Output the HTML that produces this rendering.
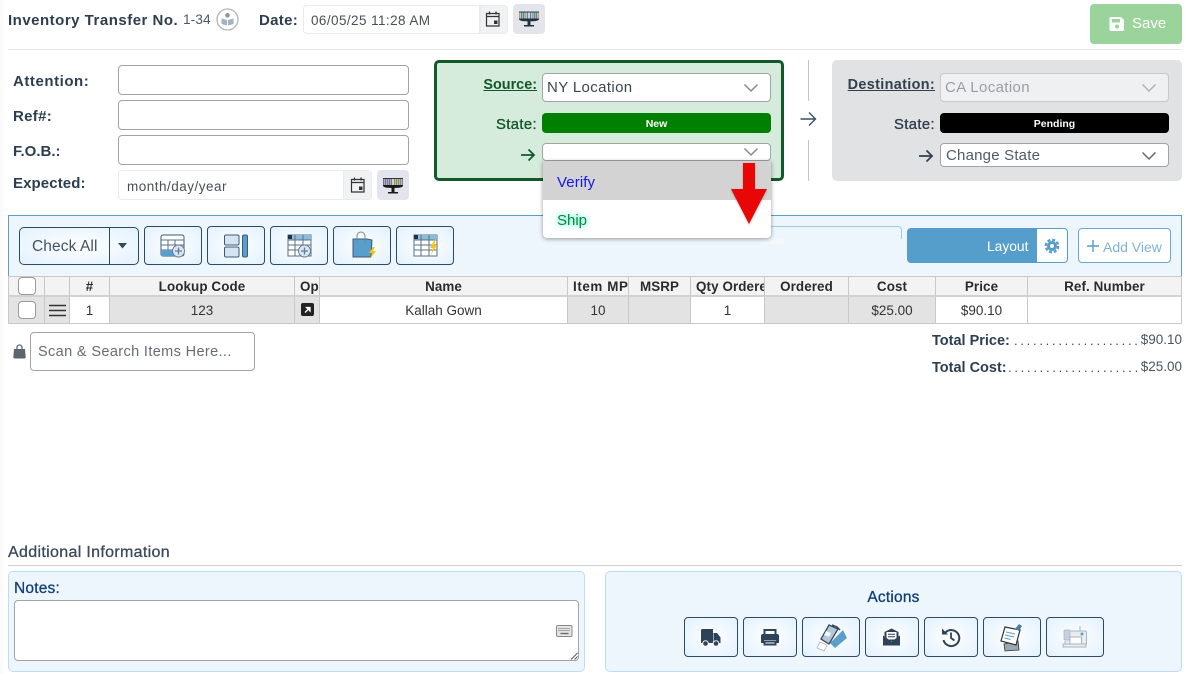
<!DOCTYPE html>
<html lang="en"><head><meta charset="utf-8"><title>Inventory Transfer</title>
<style>
html,body{margin:0;padding:0;background:#fff;width:1187px;height:674px;overflow:hidden}
body{position:relative;font-family:"Liberation Sans",Arial,sans-serif;color:#2c3e50;font-size:14px}
.a{position:absolute;box-sizing:border-box}
.t{position:absolute;white-space:nowrap;line-height:20px;height:20px}
.b{font-weight:700}
.inp{position:absolute;box-sizing:border-box;background:#fff;border:1px solid #a3a3a3;border-radius:4px}
.ibtn{position:absolute;box-sizing:border-box;border:1px solid #2c4a63;border-radius:4px;background:radial-gradient(ellipse at center,#fff 0%,#e2f1fe 100%)}
.ibtn svg{position:absolute;left:0;top:0}
.cell{position:absolute;box-sizing:border-box;border-right:1px solid #c8c8c8;text-align:center;color:#333;white-space:nowrap;overflow:hidden}
.h{top:276px;height:21px;background:#f3f3f3;font-weight:700;line-height:20px;font-size:13.4px;letter-spacing:.1px;color:#2b2b2b;border-top:1px solid #c8c8c8;border-bottom:2px solid #d2d2d2}
.r{top:297px;height:27px;line-height:27px;font-size:13.5px;background:#fff;border-bottom:1px solid #c8c8c8}
.g{background:#e3e3e3}
.chk{position:absolute;box-sizing:border-box;width:18px;height:18px;background:#fff;border:1px solid #9a9a9a;border-radius:4px}
</style></head><body>
<div class="a" style="left:0;top:0;width:3px;height:674px;background:#fbfbfb"></div>

<!-- header -->
<div class="t b" style="left:8px;top:11px;font-size:15px;letter-spacing:.5px">Inventory Transfer No.</div>
<div class="t" style="left:183px;top:10px;font-size:13.8px;color:#4d5b69">1-34</div>
<svg class="a" style="left:216px;top:8px" width="23" height="23" viewBox="0 0 23 23"><circle cx="11.5" cy="11.5" r="10.5" fill="#fff" stroke="#b4b4b4" stroke-width="1.3"/><circle cx="11.5" cy="7.3" r="2.3" fill="#8a96a3"/><path d="M5.500 10.500l5.500 1.500v5.500l-5.500-1.500zM17.500 10.500L12 12v5.500l5.500-1.500z" fill="#9fb3c4"/></svg>
<div class="t b" style="left:259px;top:11px;font-size:15px;letter-spacing:.3px">Date:</div>
<div class="a" style="left:303px;top:5px;width:177px;height:29px;border:1px solid #e9ecef;border-radius:4px 0 0 4px;background:#fff"></div>
<div class="t" style="left:311px;top:11px;font-size:13.5px;letter-spacing:.42px;color:#4a4f55">06/05/25 11:28 AM</div>
<div class="a" style="left:480px;top:5px;width:28px;height:29px;background:#f1f2f3;border:1px solid #e9ecef;border-radius:0 4px 4px 0"></div>
<svg class="a" style="left:485px;top:10px" width="16" height="18" viewBox="0 0 16 18"><path d="M1.500 3.500h12.500v12.500H1.500zM1.500 6.500h12.500" fill="none" stroke="#333" stroke-width="1.200"/><path d="M4.500 1.500v3M11 1.500v3" stroke="#333" stroke-width="1.300"/><rect x="9" y="10.500" width="3.500" height="3.500" fill="#333"/></svg>
<div class="a" style="left:513px;top:4px;width:32px;height:30px;background:#e2e6ec;border-radius:4px"></div>
<svg class="a" style="left:518px;top:9px" width="22" height="20" viewBox="0 0 22 20"><path d="M1 3.500h1.500v6H1zM7 3.500h1.500v6H7zM13.500 3.500H15v6h-1.500zM19.500 3.500H21v6h-1.500z" fill="#e39a2d"/><path d="M3 3.500h1.500v6H3zM5 3.500h1.500v6H5zM9 3.500h1.200v6H9zM11.800 3.500H13v6h-1.200zM15.500 3.500H17v6h-1.500zM17.500 3.500H19v6h-1.500z" fill="#3a8fd0"/><path d="M1 3h20" stroke="#2c3e50"/><path d="M1 9.500h20v.7c-1 1.800-4 2-8.500 2.100V16H16v1.500H6V16h3.500v-3.700C5 12.200 2 12 1 10.200z" fill="#22303f"/></svg>
<div class="a" style="left:1090px;top:4px;width:92px;height:40px;background:#9bd49b;border-radius:4px"></div>
<svg class="a" style="left:1109px;top:16px" width="16" height="16" viewBox="0 0 16 16"><path d="M2 1h10l3 3v9.500a1.500 1.500 0 0 1-1.500 1.500h-11.500a1.500 1.500 0 0 1-1.500-1.500V2.500A1.500 1.500 0 0 1 2 1z" fill="#fff"/><rect x="3" y="3" width="8" height="3.500" fill="#9bd49b"/><circle cx="8" cy="10.500" r="2" fill="#9bd49b"/></svg>
<div class="t" style="left:1132px;top:14px;font-size:15px;color:#fff">Save</div>
<div class="a" style="left:8px;top:49px;width:1174px;height:1px;background:#e8e8e8"></div>

<!-- left form -->
<div class="t b" style="left:13px;top:72px;font-size:15px;letter-spacing:.55px">Attention:</div>
<div class="t b" style="left:13px;top:107px;font-size:15px;letter-spacing:.3px">Ref#:</div>
<div class="t b" style="left:13px;top:142px;font-size:15px">F.O.B.:</div>
<div class="t b" style="left:13px;top:174px;font-size:15px;letter-spacing:.1px">Expected:</div>
<div class="inp" style="left:118px;top:65px;width:291px;height:30px"></div>
<div class="inp" style="left:118px;top:100px;width:291px;height:30px"></div>
<div class="inp" style="left:118px;top:135px;width:291px;height:30px"></div>
<div class="a" style="left:118px;top:170px;width:226px;height:30px;border:1px solid #e9ecef;border-radius:4px 0 0 4px;background:#fff"></div>
<div class="t" style="left:127px;top:177px;font-size:13.5px;letter-spacing:.5px;color:#4a4f55">month/day/year</div>
<div class="a" style="left:343px;top:170px;width:29px;height:30px;background:#f1f2f3;border:1px solid #e9ecef;border-radius:0 4px 4px 0"></div>
<svg class="a" style="left:350px;top:176px" width="16" height="18" viewBox="0 0 16 18"><path d="M1.500 3.500h12.500v12.500H1.500zM1.500 6.500h12.500" fill="none" stroke="#333" stroke-width="1.200"/><path d="M4.500 1.500v3M11 1.500v3" stroke="#333" stroke-width="1.300"/><rect x="9" y="10.500" width="3.500" height="3.500" fill="#333"/></svg>
<div class="a" style="left:377px;top:170px;width:32px;height:30px;background:#e2e6ec;border-radius:4px"></div>
<svg class="a" style="left:382px;top:176px" width="22" height="20" viewBox="0 0 22 20"><path d="M1 3h1.500v6H1zM7 3h1.500v6H7z" fill="#8b5fa8"/><path d="M3 3h1.500v6H3zM5 3h1.500v6H5zM9 3h1.200v6H9z" fill="#6f7f8f"/><path d="M11.800 3H13v6h-1.200zM13.500 3H15v6h-1.500z" fill="#8b9a3a"/><path d="M15.500 3H17v6h-1.500zM17.500 3H19v6h-1.500zM19.500 3H21v6h-1.500z" fill="#888"/><path d="M1 2.500h20" stroke="#333"/><path d="M1 9h20v.9c-1 1.800-4 2-8.500 2.100V16H16v1.500H6V16h3.500v-4C5 11.900 2 11.700 1 9.900z" fill="#1a1a1a"/></svg>

<!-- source -->
<div class="a" style="left:434px;top:60px;width:350px;height:121px;background:#d5ebdb;border:3px solid #14582a;border-radius:5px"></div>
<div class="t" style="right:650px;top:75px;font-size:14.4px;color:#14582a;text-decoration:underline;font-weight:700">Source:</div>
<div class="inp" style="left:542px;top:73px;width:229px;height:29px"></div>
<div class="t" style="left:547px;top:78px;font-size:15px;letter-spacing:.37px;color:#3a4652">NY Location</div>
<svg class="a" style="left:743px;top:83px" width="16" height="10" viewBox="0 0 16 10"><path d="M1.500 1.500L8 8l6.500-6.500" fill="none" stroke="#888" stroke-width="1.500"/></svg>
<div class="t" style="right:650px;top:115px;font-size:14.8px;letter-spacing:.4px;color:#14582a;-webkit-text-stroke:.35px #14582a">State:</div>
<div class="a" style="left:542px;top:113px;width:229px;height:20px;background:#008000;border-radius:4px"></div>
<div class="t b" style="left:542px;width:229px;top:114px;text-align:center;font-size:10.5px;color:#fff">New</div>
<svg class="a" style="left:520px;top:147px" width="16" height="16" viewBox="0 0 16 16"><path d="M1 8h13M8.500 2.500L14 8l-5.500 5.500" fill="none" stroke="#14582a" stroke-width="1.800"/></svg>
<div class="inp" style="left:542px;top:143px;width:229px;height:18px"></div>
<svg class="a" style="left:743px;top:147px" width="16" height="10" viewBox="0 0 16 10"><path d="M1.500 1.500L8 8l6.500-6.500" fill="none" stroke="#888" stroke-width="1.500"/></svg>

<!-- separators -->
<div class="a" style="left:808px;top:60px;width:1px;height:41px;background:#c4c4c4"></div>
<div class="a" style="left:808px;top:140px;width:1px;height:41px;background:#c4c4c4"></div>
<svg class="a" style="left:799px;top:110px" width="19" height="18" viewBox="0 0 19 18"><path d="M1.500 9h15M10 2.500L16.500 9 10 15.500" fill="none" stroke="#3d4f63" stroke-width="1.400"/></svg>

<!-- destination -->
<div class="a" style="left:832px;top:60px;width:350px;height:121px;background:#e1e2e4;border-radius:5px"></div>
<div class="t" style="right:252px;top:75px;font-size:14.4px;letter-spacing:.35px;font-weight:700;color:#333f4d;text-decoration:underline">Destination:</div>
<div class="a" style="left:940px;top:73px;width:229px;height:29px;background:#eff0f2;border:1px solid #c8c9cb;border-radius:4px"></div>
<div class="t" style="left:945px;top:78px;font-size:15px;letter-spacing:.37px;color:#9a9da1">CA Location</div>
<svg class="a" style="left:1141px;top:83px" width="16" height="10" viewBox="0 0 16 10"><path d="M1.500 1.500L8 8l6.500-6.500" fill="none" stroke="#b0b2b5" stroke-width="1.500"/></svg>
<div class="t" style="right:252px;top:115px;font-size:14.8px;letter-spacing:.4px;color:#333f4d;-webkit-text-stroke:.35px #333f4d">State:</div>
<div class="a" style="left:940px;top:113px;width:229px;height:20px;background:#000;border-radius:4px"></div>
<div class="t b" style="left:940px;width:229px;top:114px;text-align:center;font-size:10.5px;color:#fff">Pending</div>
<svg class="a" style="left:918px;top:148px" width="16" height="16" viewBox="0 0 16 16"><path d="M1 8h13M8.500 2.500L14 8l-5.500 5.500" fill="none" stroke="#333f4d" stroke-width="1.800"/></svg>
<div class="inp" style="left:940px;top:143px;width:229px;height:24px"></div>
<div class="t" style="left:946px;top:146px;font-size:15px;letter-spacing:.2px;color:#4e5c6a">Change State</div>
<svg class="a" style="left:1141px;top:151px" width="16" height="10" viewBox="0 0 16 10"><path d="M1.500 1.500L8 8l6.500-6.500" fill="none" stroke="#666" stroke-width="1.500"/></svg>

<!-- toolbar panel -->
<div class="a" style="left:8px;top:215px;width:1174px;height:61px;background:#eef6fd;border:1px solid #5a9fca;border-bottom:0"></div>
<div class="a" style="left:600px;top:226px;width:302px;height:13px;border-top:1px solid #9ccbe8;border-right:1px solid #9ccbe8;border-radius:0 4px 0 0"></div>
<div class="a" style="left:19px;top:227px;width:120px;height:38px;border:1px solid #2c4a63;border-radius:5px;background:radial-gradient(ellipse at center,#fff 0%,#e2f1fe 100%)"></div>
<div class="a" style="left:109px;top:227px;width:1px;height:38px;background:#2c4a63"></div>
<div class="t" style="left:32px;top:237px;font-size:15.5px;letter-spacing:.1px;color:#3f5266">Check All</div>
<svg class="a" style="left:118px;top:243px" width="10" height="6" viewBox="0 0 10 6"><path d="M0 0h9L4.500 5.500z" fill="#2c4a63"/></svg>

<div class="ibtn" style="left:144px;top:226px;width:58px;height:39px"><svg width="56" height="37" viewBox="0 0 56 37"><rect x="16" y="8" width="23" height="21" rx="2" fill="#fff" stroke="#3f5a73" stroke-width="1"/><path d="M16 13h23M16 18h23M16 23h23M23 13v16M30 13v16" stroke="#5a7186" stroke-width="1"/><rect x="16" y="23" width="14" height="6" fill="#5a9ecb"/><circle cx="33.500" cy="24" r="6" fill="#dbe6ef" stroke="#5d7d99" stroke-width="1"/><path d="M33.500 20.500v7M30 24h7" stroke="#5d7d99" stroke-width="1.300"/></svg></div>
<div class="ibtn" style="left:207px;top:226px;width:58px;height:39px"><svg width="56" height="37" viewBox="0 0 56 37"><rect x="16.500" y="8" width="14.500" height="10" rx="1.500" fill="#d5e4f1" stroke="#3f5a73"/><rect x="16.500" y="20" width="14.500" height="10" rx="1.500" fill="#d5e4f1" stroke="#3f5a73"/><rect x="34.500" y="8" width="5" height="22" rx="1.500" fill="#5a9ecb" stroke="#3f5a73"/></svg></div>
<div class="ibtn" style="left:270px;top:226px;width:58px;height:39px"><svg width="56" height="37" viewBox="0 0 56 37"><rect x="17" y="8" width="23" height="21" fill="#fff" stroke="#5a7186"/><rect x="17" y="8" width="23" height="5" fill="#8cbbdc"/><rect x="17" y="8" width="4" height="4" fill="#1f3346"/><path d="M17 13h23M17 18h23M17 23h23M24 8v21M32 8v21" stroke="#5a7186"/><circle cx="33.500" cy="24" r="6" fill="#dbe6ef" stroke="#5d7d99"/><path d="M33.500 20.500v7M30 24h7" stroke="#5d7d99" stroke-width="1.300"/></svg></div>
<div class="ibtn" style="left:333px;top:226px;width:58px;height:39px"><svg width="56" height="37" viewBox="0 0 56 37"><path d="M19 12h14l5 1-1 17H19z" fill="#5a9ecb" stroke="#3f5a73"/><path d="M23 16V9a4 4 0 0 1 8 0v7" fill="none" stroke="#778898"/><path d="M39 20l-4 6h3l-2 6 6-8h-3l2-4z" fill="#f4c60f"/></svg></div>
<div class="ibtn" style="left:396px;top:226px;width:58px;height:39px"><svg width="56" height="37" viewBox="0 0 56 37"><rect x="17" y="8" width="23" height="21" fill="#fff" stroke="#5a7186"/><rect x="17" y="8" width="23" height="5" fill="#8cbbdc"/><rect x="17" y="8" width="4" height="4" fill="#1f3346"/><path d="M17 13h23M17 18h23M17 23h23M24 8v21M32 8v21" stroke="#5a7186"/><path d="M38 12l-5 9h3l-2 7 6-10h-3l2-6z" fill="#f4c60f"/></svg></div>

<div class="a" style="left:907px;top:228px;width:161px;height:35px;background:#559ecb;border-radius:4px;border:1px solid #559ecb"></div>
<div class="a" style="left:1037px;top:229px;width:30px;height:33px;background:#fff;border-radius:0 3px 3px 0"></div>
<div class="t" style="left:987px;top:237px;font-size:13.8px;color:#fff">Layout</div>
<svg class="a" style="left:1044px;top:238px" width="16" height="16" viewBox="0 0 16 16"><circle cx="8" cy="8" r="5" fill="#559ecb"/><circle cx="8" cy="8" r="6.200" fill="none" stroke="#559ecb" stroke-width="2.400" stroke-dasharray="3 1.870"/><circle cx="8" cy="8" r="2" fill="#fff"/></svg>
<div class="a" style="left:1078px;top:228px;width:93px;height:35px;background:#fff;border:1px solid #6aa8d2;border-radius:4px"></div>
<svg class="a" style="left:1087px;top:240px" width="12" height="12" viewBox="0 0 12 12"><path d="M6 0v12M0 6h12" stroke="#559ecb" stroke-width="1.400"/></svg>
<div class="t" style="left:1103px;top:237px;font-size:14px;color:#7eb3d8">Add View</div>

<!-- dropdown (over panel) -->
<div class="a" style="left:762px;top:238px;width:22px;height:6px;background:#f4f8fd"></div>
<div class="a" style="left:543px;top:161px;width:228px;height:77px;background:#fff;border-radius:0 0 4px 4px;box-shadow:0 1px 4px rgba(0,0,0,.4)"></div>
<div class="a" style="left:543px;top:161px;width:228px;height:39px;background:#d3d3d3"></div>
<div class="t" style="left:557px;top:173px;font-size:15px;letter-spacing:.1px;color:#1414f0">Verify</div>
<div class="t" style="left:557px;top:211px;font-size:15px;color:#0a8a2a;text-shadow:0 0 6px #4ff5e5,0 0 9px #9ff8ee">Ship</div>
<svg class="a" style="left:728px;top:160px;filter:drop-shadow(0 1px 1px rgba(0,0,0,.25))" width="42" height="68" viewBox="0 0 42 68"><path d="M15 3h12v26h12L21 64 3 29h12z" fill="#e80606"/></svg>

<!-- table -->
<div class="a" style="left:8px;top:276px;width:1174px;height:48px;border-left:1px solid #c8c8c8;border-right:1px solid #c8c8c8"></div>
<div class="cell h" style="left:9px;width:36px"></div>
<div class="cell h" style="left:45px;width:25px"></div>
<div class="cell h" style="left:70px;width:40px">#</div>
<div class="cell h" style="left:110px;width:185px">Lookup Code</div>
<div class="cell h" style="left:295px;width:25px;text-align:left;padding-left:5px">Op</div>
<div class="cell h" style="left:320px;width:248px">Name</div>
<div class="cell h" style="left:568px;width:61px;text-align:left;padding-left:5px;letter-spacing:.6px">Item MP</div>
<div class="cell h" style="left:629px;width:62px">MSRP</div>
<div class="cell h" style="left:691px;width:74px;text-align:left;padding-left:5px">Qty Ordered</div>
<div class="cell h" style="left:765px;width:84px">Ordered</div>
<div class="cell h" style="left:849px;width:87px">Cost</div>
<div class="cell h" style="left:936px;width:92px">Price</div>
<div class="cell h" style="left:1028px;width:154px;border-right:1px solid #c8c8c8">Ref. Number</div>
<div class="cell r g" style="left:9px;width:36px"></div>
<div class="cell r g" style="left:45px;width:25px"></div>
<div class="cell r" style="left:70px;width:40px">1</div>
<div class="cell r g" style="left:110px;width:185px">123</div>
<div class="cell r g" style="left:295px;width:25px"></div>
<div class="cell r" style="left:320px;width:248px">Kallah Gown</div>
<div class="cell r g" style="left:568px;width:61px">10</div>
<div class="cell r g" style="left:629px;width:62px"></div>
<div class="cell r" style="left:691px;width:74px">1</div>
<div class="cell r g" style="left:765px;width:84px"></div>
<div class="cell r g" style="left:849px;width:87px">$25.00</div>
<div class="cell r" style="left:936px;width:92px">$90.10</div>
<div class="cell r" style="left:1028px;width:154px"></div>
<div class="chk" style="left:18px;top:277px"></div>
<div class="chk" style="left:18px;top:301px"></div>
<svg class="a" style="left:49px;top:304px" width="17" height="13" viewBox="0 0 17 13"><path d="M0 1.500h17M0 6.500h17M0 11.500h17" stroke="#333" stroke-width="1.500"/></svg>
<svg class="a" style="left:301px;top:303px" width="13" height="13" viewBox="0 0 13 13"><rect width="13" height="13" rx="2" fill="#222"/><path d="M4 9.500L8.500 5M5.500 4.500h3.500v3.500z" stroke="#fff" stroke-width="1.300" fill="#fff"/></svg>

<!-- search -->
<svg class="a" style="left:13px;top:344px" width="13" height="15" viewBox="0 0 13 15"><path d="M4 5V3.500a2.500 2.500 0 0 1 5 0V5" fill="none" stroke="#5d6670" stroke-width="1.300"/><path d="M1 5h11l.7 8a1.500 1.500 0 0 1-1.500 1.500H1.800A1.500 1.500 0 0 1 .3 13z" fill="#5d6670"/></svg>
<div class="inp" style="left:30px;top:332px;width:225px;height:39px"></div>
<div class="t" style="left:38px;top:342px;font-size:14.5px;letter-spacing:.37px;color:#666d74">Scan &amp; Search Items Here...</div>

<!-- totals -->
<div class="t b" style="left:932px;top:331px;font-size:14.5px;color:#2c3e50">Total Price:</div>
<div class="t" style="left:1014px;top:331px;width:128px;overflow:hidden;font-size:13px;letter-spacing:2.72px;color:#444">.....................</div>
<div class="t" style="right:5px;top:330px;font-size:13.5px;color:#4a5560">$90.10</div>
<div class="t b" style="left:932px;top:358px;font-size:14.5px;color:#2c3e50">Total Cost:</div>
<div class="t" style="left:1008px;top:358px;width:134px;overflow:hidden;font-size:13px;letter-spacing:2.72px;color:#444">.......................</div>
<div class="t" style="right:5px;top:357px;font-size:13.5px;color:#4a5560">$25.00</div>

<!-- additional -->
<div class="t" style="left:8px;top:543px;font-size:16px;letter-spacing:.33px;color:#3a4a5a;-webkit-text-stroke:.3px #3a4a5a">Additional Information</div>
<div class="a" style="left:8px;top:565px;width:1174px;height:1px;background:#cfcfcf"></div>
<div class="a" style="left:8px;top:571px;width:577px;height:101px;background:#eef6fd;border:1px solid #bcdcfb;border-radius:5px"></div>
<div class="t" style="left:14px;top:579px;font-size:15.5px;letter-spacing:.2px;color:#0f3d78;-webkit-text-stroke:.25px #0f3d78">Notes:</div>
<div class="inp" style="left:14px;top:600px;width:565px;height:61px"></div>
<svg class="a" style="left:556px;top:625px" width="17" height="13" viewBox="0 0 17 13"><rect x=".5" y=".5" width="15.500" height="11" rx="1.500" fill="#e4e4e4" stroke="#8a8a8a"/><path d="M2.500 3.500h12M2.500 5.500h12" stroke="#666" stroke-dasharray="1 1"/><path d="M4.500 8.500h8" stroke="#666" stroke-width="1.300"/></svg>
<svg class="a" style="left:570px;top:652px" width="8" height="8" viewBox="0 0 8 8"><path d="M1 7.500L7.500 1M4.500 7.500L7.500 4.500" stroke="#555" stroke-width=".9"/></svg>

<div class="a" style="left:605px;top:571px;width:577px;height:101px;background:#eef6fd;border:1px solid #bcdcfb;border-radius:5px"></div>
<div class="t" style="left:605px;width:577px;top:588px;text-align:center;font-size:15.5px;letter-spacing:.2px;color:#0f3d78;-webkit-text-stroke:.3px #0f3d78">Actions</div>

<div class="ibtn" style="left:684px;top:617px;width:54px;height:40px"><svg width="52" height="38" viewBox="0 0 52 38"><path d="M16 12.500a1.500 1.500 0 0 1 1.500-1.500H28v14H16z" fill="#2f4358"/><path d="M28.500 15h3.500l3.500 4.500V25h-7z" fill="#2f4358"/><circle cx="20.500" cy="25.500" r="2.800" fill="#2f4358" stroke="#eef6fd"/><circle cx="31" cy="25.500" r="2.800" fill="#2f4358" stroke="#eef6fd"/></svg></div>
<div class="ibtn" style="left:743px;top:617px;width:54px;height:40px"><svg width="52" height="38" viewBox="0 0 52 38"><path d="M20.500 16v-4h11v4" fill="none" stroke="#2f4358" stroke-width="2"/><path d="M19 16h14a2 2 0 0 1 2 2v7h-3v-3H20v3h-3v-7a2 2 0 0 1 2-2z" fill="#2f4358"/><path d="M20.500 23.500h11v3h-11z" fill="none" stroke="#2f4358" stroke-width="2"/></svg></div>
<div class="ibtn" style="left:802px;top:617px;width:58px;height:40px"><svg width="56" height="38" viewBox="0 0 56 38"><path d="M27 25l13-13 4 8-12 10z" fill="#5a9ecb"/><path d="M18 21l8-14 9 4-9 15z" fill="#b4c6d8" stroke="#34495e" stroke-width="1.300"/><path d="M23 13l5 2-2 4-5-2z" fill="#eef5fb"/><path d="M17 24l7 3-3 6-7-3z" fill="#fff" stroke="#aaa" stroke-width=".7"/><path d="M29 7l5 2 3 3" fill="none" stroke="#34495e" stroke-width="1.500"/></svg></div>
<div class="ibtn" style="left:865px;top:617px;width:54px;height:40px"><svg width="52" height="38" viewBox="0 0 52 38"><path d="M18.500 14l7-3.500 7 3.500v9h-14z" fill="#2f4358"/><rect x="20.500" y="14" width="10" height="7.500" fill="#fff"/><path d="M22 16.300h7M22 18.700h7" stroke="#2f4358"/><path d="M17 17.500l8.500 6 8.500-6V27.500H17z" fill="#2f4358"/></svg></div>
<div class="ibtn" style="left:924px;top:617px;width:54px;height:40px"><svg width="52" height="38" viewBox="0 0 52 38"><path d="M20.500 14.500A8 8 0 1 1 18.500 22" fill="none" stroke="#2f4358" stroke-width="2"/><path d="M17 10.500v6h6z" fill="#2f4358"/><path d="M26 14.500v5.500l3.500 2.500" fill="none" stroke="#2f4358" stroke-width="1.800"/></svg></div>
<div class="ibtn" style="left:983px;top:617px;width:58px;height:40px"><svg width="56" height="38" viewBox="0 0 56 38"><path d="M20 26l14-3 1 9-14 1z" fill="#98a8b5" stroke="#333" stroke-width=".8"/><path d="M21 9l15 3-4 15-15-4z" fill="#fff" stroke="#333" stroke-width="1.200"/><path d="M22 14l9 2M21 17l9 2M20.500 20l6 1.500" stroke="#5a9ecb"/><path d="M31 11l4-5 3 2-3 5z" fill="#4a7f9f"/></svg></div>
<div class="ibtn" style="left:1046px;top:617px;width:58px;height:40px"><svg width="56" height="38" viewBox="0 0 56 38"><path d="M16 26h23v3H16z" fill="#e6edf3" stroke="#aab4bd"/><path d="M17 13h21a1.500 1.500 0 0 1 1.500 1.500V26h-5V19H23v7h-5v-3" fill="#e6edf3" stroke="#aab4bd"/><rect x="17" y="12" width="6" height="10" rx="1" fill="#c4cfdf" stroke="#aab4bd" stroke-width=".7"/><circle cx="35" cy="16" r="1.500" fill="#5a9ecb"/><path d="M33 13V8" stroke="#aab4bd"/></svg></div>

</body></html>
